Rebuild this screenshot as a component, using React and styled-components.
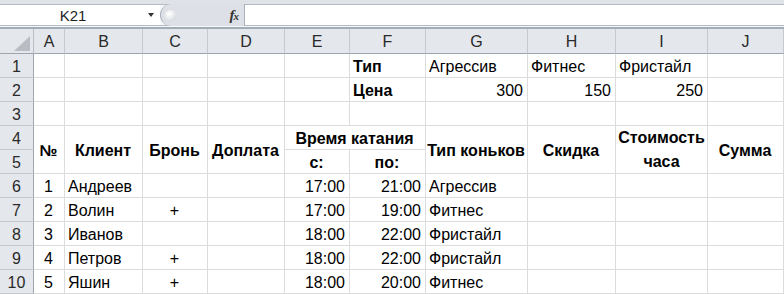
import React from "react";
import styled, { createGlobalStyle } from "styled-components";

const GlobalStyle = createGlobalStyle`
  html, body {
    margin: 0;
    padding: 0;
    background: #ffffff;
  }
  body {
    font-family: "Liberation Sans", Arial, sans-serif;
    width: 784px;
    height: 294px;
    overflow: hidden;
  }
  * {
    box-sizing: border-box;
  }
`;

const LETTERS = ["A", "B", "C", "D", "E", "F", "G", "H", "I", "J"];

// merged header cells: key "row-col" -> span
const merges = {
  "4-1": { rs: 2, cs: 1 },
  "4-2": { rs: 2, cs: 1 },
  "4-3": { rs: 2, cs: 1 },
  "4-4": { rs: 2, cs: 1 },
  "4-5": { rs: 1, cs: 2 },
  "4-7": { rs: 2, cs: 1 },
  "4-8": { rs: 2, cs: 1 },
  "4-9": { rs: 2, cs: 1 },
  "4-10": { rs: 2, cs: 1 },
};

const covered = new Set(["5-1", "5-2", "5-3", "5-4", "4-6", "5-7", "5-8", "5-9", "5-10"]);

const clients = [
  ["1", "Андреев", "", "17:00", "21:00", "Агрессив"],
  ["2", "Волин", "+", "17:00", "19:00", "Фитнес"],
  ["3", "Иванов", "", "18:00", "22:00", "Фристайл"],
  ["4", "Петров", "+", "18:00", "22:00", "Фристайл"],
  ["5", "Яшин", "+", "18:00", "20:00", "Фитнес"],
];

const values = {
  "1-6": { text: "Тип", bold: true },
  "1-7": { text: "Агрессив" },
  "1-8": { text: "Фитнес" },
  "1-9": { text: "Фристайл" },
  "2-6": { text: "Цена", bold: true },
  "2-7": { text: "300", align: "right" },
  "2-8": { text: "150", align: "right" },
  "2-9": { text: "250", align: "right" },
  "4-1": { text: "№", bold: true, align: "center" },
  "4-2": { text: "Клиент", bold: true, align: "center" },
  "4-3": { text: "Бронь", bold: true, align: "center" },
  "4-4": { text: "Доплата", bold: true, align: "center" },
  "4-5": { text: "Время катания", bold: true, align: "center" },
  "5-5": { text: "с:", bold: true, align: "center" },
  "5-6": { text: "по:", bold: true, align: "center" },
  "4-7": { text: "Тип коньков", bold: true, align: "center" },
  "4-8": { text: "Скидка", bold: true, align: "center" },
  "4-9": { text: "Стоимость часа", bold: true, align: "center", wrap: true },
  "4-10": { text: "Сумма", bold: true, align: "center" },
};

clients.forEach((c, i) => {
  const r = 6 + i;
  values[`${r}-1`] = { text: c[0], align: "center" };
  values[`${r}-2`] = { text: c[1] };
  values[`${r}-3`] = { text: c[2], align: "center" };
  values[`${r}-5`] = { text: c[3], align: "right" };
  values[`${r}-6`] = { text: c[4], align: "right" };
  values[`${r}-7`] = { text: c[5] };
});

const Window = styled.div`
  width: 784px;
  height: 294px;
  display: flex;
  flex-direction: column;
  background: #ffffff;
`;

const FormulaBar = styled.div`
  height: 27px;
  padding-top: 4px;
  background: linear-gradient(#dfe3e8, #dfe3e8 4px, #f6f7f9 4px);
  display: flex;
  flex-direction: column;
`;

const BarRow = styled.div`
  height: 22px;
  display: flex;
  border-top: 1px solid #b4bbc4;
  border-bottom: 1px solid #b4bbc4;
`;

const NameBox = styled.div`
  width: 160px;
  display: flex;
  align-items: center;
  background: #ffffff;
  font-size: 15px;
  color: #1e1e1e;
`;

const NameText = styled.span`
  flex: 1;
  text-align: center;
  padding-right: 2px;
`;

const Arrow = styled.span`
  width: 0;
  height: 0;
  margin-right: 6px;
  border-left: 3.5px solid transparent;
  border-right: 3.5px solid transparent;
  border-top: 4px solid #333;
`;

const Middle = styled.div`
  width: 85px;
  display: flex;
  align-items: center;
  justify-content: space-between;
  background: #dde1e7;
  border-left: 1px solid #a9b0ba;
  border-right: 1px solid #a9b0ba;
  border-radius: 11px 0 0 11px;
  margin: -1px 0;
  padding: 0 6px 0 4px;
`;

const Knob = styled.span`
  width: 11px;
  height: 11px;
  border-radius: 50%;
  background: radial-gradient(circle at 40% 35%, #ffffff, #e5e8ec 55%, #c2c7ce);
`;

const Fx = styled.span`
  font-family: "Liberation Serif", "Times New Roman", serif;
  font-style: italic;
  font-weight: bold;
  font-size: 15px;
  color: #333;
  letter-spacing: -1px;

  small {
    font-size: 11px;
  }
`;

const FormulaInput = styled.div`
  flex: 1;
  background: #ffffff;
`;

const Separator = styled.div`
  height: 2px;
  background: #a3abb5;
`;

const Sheet = styled.div`
  display: grid;
  grid-template-columns: 34px 31px 78px 65px 77px 65px 76px 102px 88px 92px 76px;
  grid-template-rows: 25px repeat(10, 24px);
  font-size: 16px;
  color: #000;
`;

const Corner = styled.div`
  position: relative;
  background: #e4e7eb;
  border-right: 1px solid #b9bfc7;
  border-bottom: 1px solid #9ea5ae;

  &::after {
    content: "";
    position: absolute;
    right: 3px;
    bottom: 2px;
    width: 16px;
    height: 15px;
    background: #b9bdc3;
    clip-path: polygon(100% 0, 100% 100%, 0 100%);
  }
`;

const ColHead = styled.div`
  display: flex;
  align-items: center;
  justify-content: center;
  padding-top: 2px;
  background: #e4e7eb;
  border-right: 1px solid #c5cad1;
  border-bottom: 1px solid #9ea5ae;
  color: #2a2a2a;
`;

const RowHead = styled.div`
  grid-row: ${(p) => p.$row};
  grid-column: 1;
  display: flex;
  align-items: center;
  justify-content: center;
  padding-top: 2px;
  background: #e4e7eb;
  border-right: 1px solid #9ea5ae;
  border-bottom: 1px solid #c5cad1;
  color: #2a2a2a;
`;

const Cell = styled.div`
  grid-row: ${(p) => p.$row} / span ${(p) => p.$rs};
  grid-column: ${(p) => p.$col} / span ${(p) => p.$cs};
  display: flex;
  align-items: center;
  justify-content: ${(p) =>
    p.$align === "right" ? "flex-end" : p.$align === "center" ? "center" : "flex-start"};
  text-align: ${(p) => p.$align || "left"};
  padding: ${(p) => (p.$wrap ? "0 2px" : "2px 4px 0 3px")};
  border-right: 1px solid #dadcdd;
  border-bottom: 1px solid #dadcdd;
  font-weight: ${(p) => (p.$bold ? "bold" : "normal")};
  line-height: ${(p) => (p.$wrap ? "24px" : "normal")};
  white-space: ${(p) => (p.$wrap ? "normal" : "nowrap")};
`;

const App = () => {
  const cells = [];
  for (let r = 1; r <= 10; r++) {
    cells.push(
      <RowHead key={`rh-${r}`} $row={r + 1}>
        {r}
      </RowHead>
    );
    for (let c = 1; c <= 10; c++) {
      const key = `${r}-${c}`;
      if (covered.has(key)) continue;
      const span = merges[key] || { rs: 1, cs: 1 };
      const v = values[key] || {};
      cells.push(
        <Cell
          key={key}
          $row={r + 1}
          $col={c + 1}
          $rs={span.rs}
          $cs={span.cs}
          $align={v.align}
          $bold={v.bold}
          $wrap={v.wrap}
        >
          {v.text}
        </Cell>
      );
    }
  }

  return (
    <Window>
      <GlobalStyle />
      <FormulaBar>
        <BarRow>
          <NameBox>
            <NameText>K21</NameText>
            <Arrow />
          </NameBox>
          <Middle>
            <Knob />
            <Fx>
              f<small>x</small>
            </Fx>
          </Middle>
          <FormulaInput />
        </BarRow>
      </FormulaBar>
      <Separator />
      <Sheet>
        <Corner />
        {LETTERS.map((l) => (
          <ColHead key={l}>{l}</ColHead>
        ))}
        {cells}
      </Sheet>
    </Window>
  );
};

export default App;
